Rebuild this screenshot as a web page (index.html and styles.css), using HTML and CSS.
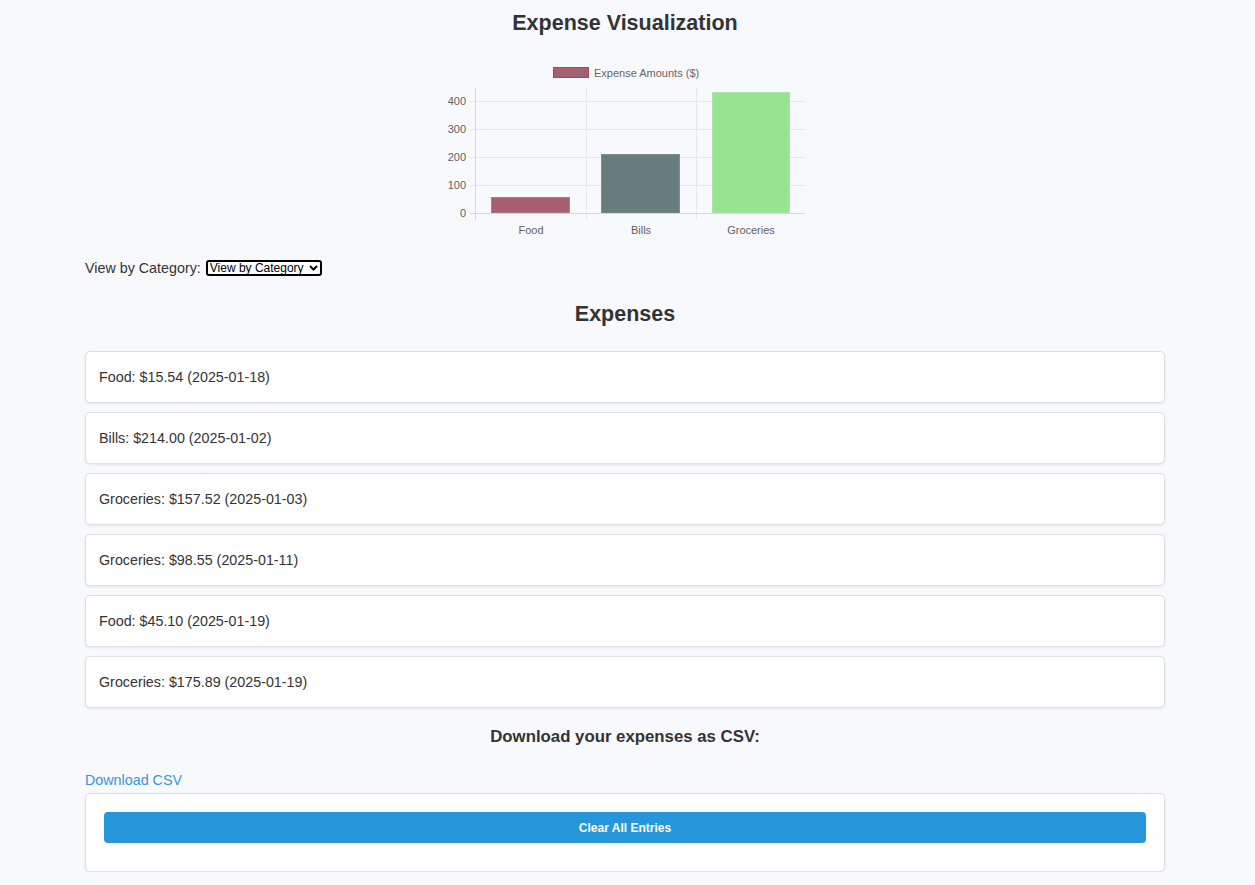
FILE: index.html
```html
<!DOCTYPE html>
<html lang="en">
<head>
<meta charset="utf-8">
<title>Expense Tracker</title>
<link rel="stylesheet" href="styles.css">
</head>
<body>
<div class="container">
  <h1 class="title">Expense Visualization</h1>
  <div class="chart-wrap">
    <svg class="chart" width="370" height="185" viewBox="0 0 370 185">
      <!-- legend -->
      <rect x="113.5" y="10.5" width="35" height="10" fill="#a86070" stroke="#9b4a5f" stroke-width="1"/>
      <text x="154" y="19.5" class="legend-text">Expense Amounts ($)</text>
      <!-- horizontal grid -->
      <g stroke="#e6e7ea" stroke-width="1">
        <line x1="30" y1="44.5" x2="365" y2="44.5"/>
        <line x1="30" y1="72.5" x2="365" y2="72.5"/>
        <line x1="30" y1="100.5" x2="365" y2="100.5"/>
        <line x1="30" y1="128.5" x2="365" y2="128.5"/>
      </g>
      <!-- vertical grid -->
      <g stroke="#e6e7ea" stroke-width="1">
        <line x1="146.5" y1="31" x2="146.5" y2="163"/>
        <line x1="256.5" y1="31" x2="256.5" y2="163"/>
      </g>
      <!-- bars -->
      <rect x="51.5" y="140.5" width="78" height="15.5" fill="#a86070" stroke="#b6798a" stroke-width="1"/>
      <rect x="161.5" y="97.5" width="78" height="58.5" fill="#667f7e" stroke="#7b9190" stroke-width="1"/>
      <rect x="272.5" y="35.5" width="77" height="120.5" fill="#97e391" stroke="#a8e8a3" stroke-width="1"/>
      <!-- axes -->
      <g stroke="#d6d7db" stroke-width="1">
        <line x1="35.5" y1="31" x2="35.5" y2="163"/>
        <line x1="30" y1="156.5" x2="365" y2="156.5"/>
      </g>
      <!-- y labels -->
      <g class="tick-text" text-anchor="end">
        <text x="26" y="48">400</text>
        <text x="26" y="76">300</text>
        <text x="26" y="104">200</text>
        <text x="26" y="132">100</text>
        <text x="26" y="160">0</text>
      </g>
      <!-- x labels -->
      <g class="tick-text" text-anchor="middle">
        <text x="91" y="177">Food</text>
        <text x="201" y="177">Bills</text>
        <text x="311" y="177">Groceries</text>
      </g>
    </svg>
  </div>

  <div class="filter-row">
    <label class="filter-label" for="cat">View by Category:</label>
    <span class="select-wrap">
      <select id="cat" class="select">
        <option>View by Category</option>
        <option>Food</option>
        <option>Bills</option>
        <option>Groceries</option>
      </select>
      <svg class="chev" width="9" height="6" viewBox="0 0 9 6"><path d="M1 1 L4.5 4.5 L8 1" fill="none" stroke="#000" stroke-width="2"/></svg>
    </span>
  </div>

  <h2 class="section-title">Expenses</h2>

  <ul class="list">
    <li class="card item">Food: $15.54 (2025-01-18)</li>
    <li class="card item">Bills: $214.00 (2025-01-02)</li>
    <li class="card item">Groceries: $157.52 (2025-01-03)</li>
    <li class="card item">Groceries: $98.55 (2025-01-11)</li>
    <li class="card item">Food: $45.10 (2025-01-19)</li>
    <li class="card item">Groceries: $175.89 (2025-01-19)</li>
  </ul>

  <h3 class="download-title">Download your expenses as CSV:</h3>
  <a class="download-link" href="#">Download CSV</a>

  <div class="card actions">
    <button class="clear-btn" type="button">Clear All Entries</button>
  </div>
</div>
</body>
</html>
```

FILE: styles.css
```css
* { box-sizing: border-box; }

body {
  margin: 0;
  padding: 0 5px 0 0;
  background: #f8f9fc;
  color: #333;
  font-family: "Liberation Sans", Arial, sans-serif;
  font-size: 14px;
}

.container {
  max-width: 1080px;
  margin: 0 auto;
}

.title {
  margin: 10px 0 0;
  font-size: 21.5px;
  line-height: 26px;
  text-align: center;
  font-weight: bold;
}

.chart-wrap {
  margin-top: 21px;
  display: flex;
  justify-content: center;
}

.chart { display: block; }

.legend-text {
  font-family: "Liberation Sans", Arial, sans-serif;
  font-size: 11px;
  fill: #666;
}

.tick-text {
  font-family: "Liberation Sans", Arial, sans-serif;
  font-size: 11px;
  fill: #5f5f5f;
}

.filter-row {
  margin-top: 16px;
  display: flex;
  align-items: center;
  gap: 5px;
  height: 20px;
}

.filter-label {
  font-size: 14.3px;
  color: #333;
}

.select-wrap {
  position: relative;
  display: inline-flex;
}

.select {
  appearance: none;
  -webkit-appearance: none;
  font-family: "Liberation Sans", Arial, sans-serif;
  font-size: 12px;
  color: #000;
  background: #fff;
  border: 2px solid #000;
  border-radius: 3px;
  height: 16px;
  line-height: 12px;
  padding: 0 16px 0 2px;
  width: 116px;
}

.chev {
  position: absolute;
  right: 4px;
  top: 5px;
  pointer-events: none;
}

.section-title {
  margin: 23px 0 0;
  font-size: 21.5px;
  line-height: 26px;
  text-align: center;
  font-weight: bold;
}

.list {
  list-style: none;
  margin: 24px 0 0;
  padding: 0;
  display: flex;
  flex-direction: column;
  gap: 9px;
}

.card {
  background: #fff;
  border: 1px solid #dedfe2;
  border-radius: 5px;
  box-shadow: 0 1px 3px rgba(0, 0, 0, 0.08);
}

.item {
  padding: 15px 13px;
  line-height: 20px;
  font-size: 14.3px;
  color: #333;
}

.download-title {
  margin: 19px 0 0;
  font-size: 16.8px;
  line-height: 20px;
  text-align: center;
  font-weight: bold;
}

.download-link {
  display: block;
  margin-top: 25px;
  font-size: 14.3px;
  line-height: 16px;
  color: #3498db;
  text-decoration: none;
  width: max-content;
}

.actions {
  margin-top: 5px;
  padding: 18px 18px 28px;
}

.clear-btn {
  display: block;
  width: 100%;
  height: 31px;
  border: none;
  border-radius: 4px;
  background: #2596d9;
  color: #fff;
  font-family: "Liberation Sans", Arial, sans-serif;
  font-size: 12px;
  font-weight: bold;
  cursor: pointer;
}
```
